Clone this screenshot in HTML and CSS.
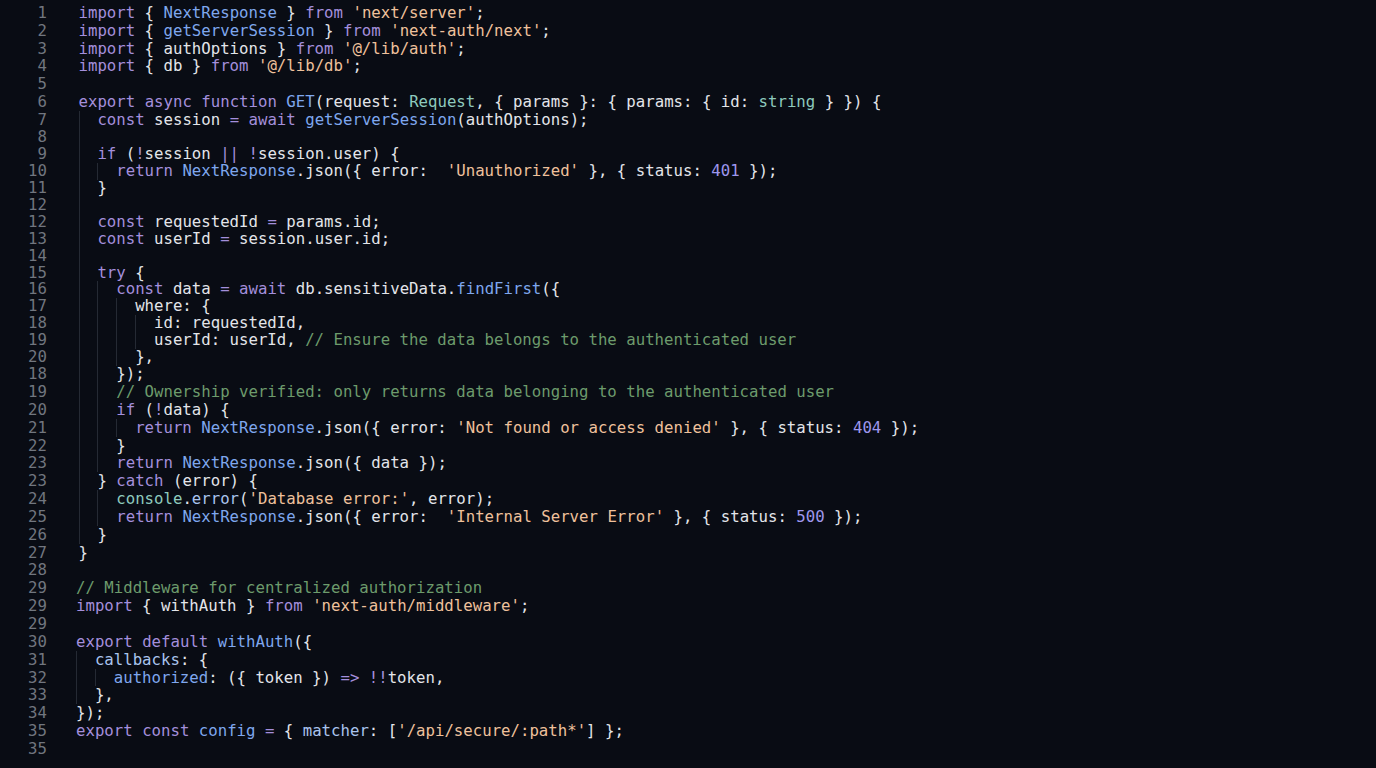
FILE: index.html
```html
<!DOCTYPE html>
<html lang="en">
<head>
<meta charset="utf-8">
<title>route.ts</title>
<link rel="stylesheet" href="styles.css">
</head>
<body>
<main class="editor">
<section class="blk blk-a">
<div class="row"><span class="n">1</span><span class="c"><span class="k">import</span> { <span class="f">NextResponse</span> } <span class="k">from</span> <span class="s">'next/server'</span>;</span></div>
<div class="row"><span class="n">2</span><span class="c"><span class="k">import</span> { <span class="f">getServerSession</span> } <span class="k">from</span> <span class="s">'next-auth/next'</span>;</span></div>
<div class="row"><span class="n">3</span><span class="c"><span class="k">import</span> { authOptions } <span class="k">from</span> <span class="s">'@/lib/auth'</span>;</span></div>
<div class="row"><span class="n">4</span><span class="c"><span class="k">import</span> { db } <span class="k">from</span> <span class="s">'@/lib/db'</span>;</span></div>
<div class="row"><span class="n">5</span><span class="c"></span></div>
<div class="row"><span class="n">6</span><span class="c"><span class="k">export</span> <span class="k">async</span> <span class="k">function</span> <span class="f">GET</span>(request: <span class="t">Request</span>, { params }: { params: { id: <span class="t">string</span> } }) {</span></div>
<div class="row"><span class="n">7</span><span class="c"><i class="g"></i><span class="k">const</span> session <span class="o">=</span> <span class="k">await</span> <span class="f">getServerSession</span>(authOptions);</span></div>
<div class="row"><span class="n">8</span><span class="c"><i class="g"></i></span></div>
</section>
<section class="blk blk-b">
<div class="row"><span class="n">9</span><span class="c"><i class="g"></i><span class="k">if</span> (<span class="o">!</span>session <span class="o">||</span> <span class="o">!</span>session.user) {</span></div>
<div class="row"><span class="n">10</span><span class="c"><i class="g"></i><i class="g"></i><span class="k">return</span> <span class="f">NextResponse</span>.json({ error:  <span class="s">'Unauthorized'</span> }, { status: <span class="m">401</span> });</span></div>
<div class="row"><span class="n">11</span><span class="c"><i class="g"></i>}</span></div>
<div class="row"><span class="n">12</span><span class="c"><i class="g"></i></span></div>
<div class="row"><span class="n">12</span><span class="c"><i class="g"></i><span class="k">const</span> requestedId <span class="o">=</span> params.id;</span></div>
<div class="row"><span class="n">13</span><span class="c"><i class="g"></i><span class="k">const</span> userId <span class="o">=</span> session.user.id;</span></div>
<div class="row"><span class="n">14</span><span class="c"><i class="g"></i></span></div>
<div class="row"><span class="n">15</span><span class="c"><i class="g"></i><span class="k">try</span> {</span></div>
<div class="row"><span class="n">16</span><span class="c"><i class="g"></i><i class="g"></i><span class="k">const</span> data <span class="o">=</span> <span class="k">await</span> db.sensitiveData.<span class="f">findFirst</span>({</span></div>
<div class="row"><span class="n">17</span><span class="c"><i class="g"></i><i class="g"></i><i class="g"></i>where: {</span></div>
<div class="row"><span class="n">18</span><span class="c"><i class="g"></i><i class="g"></i><i class="g"></i><i class="g"></i>id: requestedId,</span></div>
<div class="row"><span class="n">19</span><span class="c"><i class="g"></i><i class="g"></i><i class="g"></i><i class="g"></i>userId: userId, <span class="cm">// Ensure the data belongs to the authenticated user</span></span></div>
<div class="row"><span class="n">20</span><span class="c"><i class="g"></i><i class="g"></i><i class="g"></i>},</span></div>
<div class="row"><span class="n">18</span><span class="c"><i class="g"></i><i class="g"></i>});</span></div>
</section>
<section class="blk blk-c">
<div class="row"><span class="n">19</span><span class="c"><i class="g"></i><i class="g"></i><span class="cm">// Ownership verified: only returns data belonging to the authenticated user</span></span></div>
<div class="row"><span class="n">20</span><span class="c"><i class="g"></i><i class="g"></i><span class="k">if</span> (<span class="o">!</span>data) {</span></div>
<div class="row"><span class="n">21</span><span class="c"><i class="g"></i><i class="g"></i><i class="g"></i><span class="k">return</span> <span class="f">NextResponse</span>.json({ error: <span class="s">'Not found or access denied'</span> }, { status: <span class="m">404</span> });</span></div>
<div class="row"><span class="n">22</span><span class="c"><i class="g"></i><i class="g"></i>}</span></div>
<div class="row"><span class="n">23</span><span class="c"><i class="g"></i><i class="g"></i><span class="k">return</span> <span class="f">NextResponse</span>.json({ data });</span></div>
<div class="row"><span class="n">23</span><span class="c"><i class="g"></i>} <span class="k">catch</span> (error) {</span></div>
<div class="row"><span class="n">24</span><span class="c"><i class="g"></i><i class="g"></i><span class="t">console</span>.<span class="p">error</span>(<span class="s">'Database error:'</span>, error);</span></div>
<div class="row"><span class="n">25</span><span class="c"><i class="g"></i><i class="g"></i><span class="k">return</span> <span class="f">NextResponse</span>.json({ error:  <span class="s">'Internal Server Error'</span> }, { status: <span class="m">500</span> });</span></div>
<div class="row"><span class="n">26</span><span class="c"><i class="g"></i>}</span></div>
<div class="row"><span class="n">27</span><span class="c">}</span></div>
<div class="row"><span class="n">28</span><span class="c"></span></div>
<div class="row"><span class="n">29</span><span class="c sh"><span class="cm">// Middleware for centralized authorization</span></span></div>
<div class="row"><span class="n">29</span><span class="c sh"><span class="k">import</span> { withAuth } <span class="k">from</span> <span class="s">'next-auth/middleware'</span>;</span></div>
<div class="row"><span class="n">29</span><span class="c sh"></span></div>
<div class="row"><span class="n">30</span><span class="c sh"><span class="k">export</span> <span class="k">default</span> <span class="f">withAuth</span>({</span></div>
<div class="row"><span class="n">31</span><span class="c sh"><i class="g"></i><span class="p">callbacks</span>: {</span></div>
<div class="row"><span class="n">32</span><span class="c sh"><i class="g"></i><i class="g"></i><span class="f">authorized</span>: ({ token }) <span class="o">=&gt;</span> <span class="o">!!</span>token,</span></div>
<div class="row"><span class="n">33</span><span class="c sh"><i class="g"></i>},</span></div>
<div class="row"><span class="n">34</span><span class="c sh">});</span></div>
<div class="row"><span class="n">35</span><span class="c sh"><span class="k">export</span> <span class="k">const</span> <span class="f">config</span> <span class="o">=</span> { <span class="p">matcher</span>: [<span class="s">'/api/secure/:path*'</span>] };</span></div>
<div class="row"><span class="n">35</span><span class="c sh"></span></div>
</section>
</main>
</body>
</html>
```

FILE: styles.css
```css
html, body {
  margin: 0;
  padding: 0;
  background: #090c14;
  height: 100%;
}

body {
  overflow: hidden;
}

.editor {
  padding-top: 4.1px;
  font-family: "DejaVu Sans Mono", "Liberation Mono", monospace;
  font-size: 15.7px;
  color: #e3e5ea;
}

.blk {
  --lh: 17.75px;
}

.blk-b {
  --lh: 16.93px;
}

.blk-c {
  --lh: 17.85px;
}

.row {
  display: grid;
  grid-template-columns: 47px 1fr;
  column-gap: 31.5px;
  height: var(--lh);
  line-height: var(--lh);
  white-space: pre;
}

.n {
  text-align: right;
  color: #71767f;
}

.c {
  display: block;
}

.c.sh {
  margin-left: -2.5px;
}

.g {
  display: inline-block;
  width: 2ch;
  height: var(--lh);
  vertical-align: top;
  box-shadow: inset 1px 0 0 #252a34;
}

.k { color: #a48fdc; }
.f { color: #7fa7ee; }
.s { color: #efc19c; }
.t { color: #8ecabe; }
.m { color: #9e97ee; }
.o { color: #a48fdc; }
.cm { color: #6d9b6c; }
.p { color: #a9c4ee; }
```
